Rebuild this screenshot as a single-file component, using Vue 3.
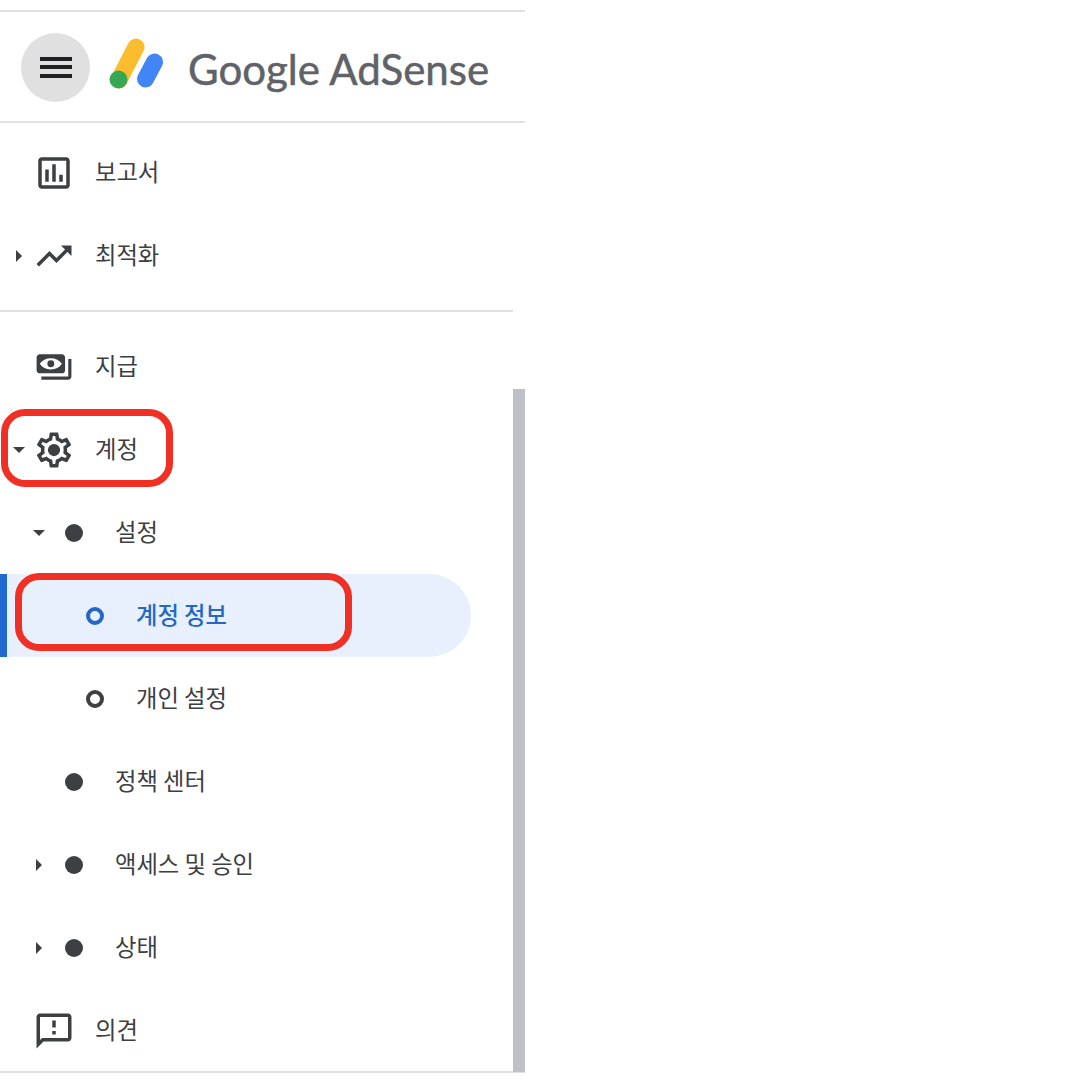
<script setup>
const ICONS = {
  report: { size: 42, d: 'M19 3H5c-1.1 0-2 .9-2 2v14c0 1.1.9 2 2 2h14c1.1 0 2-.9 2-2V5c0-1.1-.9-2-2-2zm0 16H5V5h14v14zM7 10h2v7H7zm4-3h2v10h-2zm4 6h2v4h-2z' },
  trend: { size: 42, d: 'M16 6l2.29 2.29-4.88 4.88-4-4L2 16.59 3.41 18l6-6 4 4 6.3-6.29L22 12V6z' },
  pay: { size: 38, d: 'M19 14V6c0-1.1-.9-2-2-2H3c-1.1 0-2 .9-2 2v8c0 1.1.9 2 2 2h14c1.1 0 2-.9 2-2zM3 10c1.5-2.4 4-3.6 7-3.6s5.5 1.2 7 3.6c-1.5 2.4-4 3.6-7 3.6s-5.5-1.2-7-3.6zm7-2.2a2.2 2.2 0 1 0 0 4.4 2.2 2.2 0 0 0 0-4.4zM23 7v11c0 1.1-.9 2-2 2H4v-2h17V7h2z' },
  gear: { size: 42, d: 'M19.43 12.98c.04-.32.07-.64.07-.98 0-.34-.03-.66-.07-.98l2.11-1.65c.19-.15.24-.42.12-.64l-2-3.46c-.09-.16-.26-.25-.44-.25-.06 0-.12.01-.17.03l-2.49 1c-.52-.4-1.08-.73-1.69-.98l-.38-2.65C14.46 2.18 14.25 2 14 2h-4c-.25 0-.46.18-.49.42l-.38 2.65c-.61.25-1.17.59-1.69.98l-2.49-1c-.06-.02-.12-.03-.18-.03-.17 0-.34.09-.43.25l-2 3.46c-.13.22-.07.49.12.64l2.11 1.65c-.04.32-.07.65-.07.98 0 .33.03.66.07.98l-2.11 1.65c-.19.15-.24.42-.12.64l2 3.46c.09.16.26.25.44.25.06 0 .12-.01.17-.03l2.49-1c.52.4 1.08.73 1.69.98l.38 2.65c.03.24.24.42.49.42h4c.25 0 .46-.18.49-.42l.38-2.65c.61-.25 1.17-.59 1.69-.98l2.49 1c.06.02.12.03.18.03.17 0 .34-.09.43-.25l2-3.46c.12-.22.07-.49-.12-.64l-2.11-1.65zm-1.98-1.71c.04.31.05.52.05.73 0 .21-.02.43-.05.73l-.14 1.13.89.7 1.08.84-.7 1.21-1.27-.51-1.04-.42-.9.68c-.43.32-.84.56-1.25.73l-1.06.43-.16 1.13-.2 1.35h-1.4l-.19-1.35-.16-1.13-1.06-.43c-.43-.18-.83-.41-1.23-.71l-.91-.7-1.06.43-1.27.51-.7-1.21 1.08-.84.89-.7-.14-1.13c-.03-.31-.05-.54-.05-.74s.02-.43.05-.73l.14-1.13-.89-.7-1.08-.84.7-1.21 1.27.51 1.04.42.9-.68c.43-.32.84-.56 1.25-.73l1.06-.43.16-1.13.2-1.35h1.39l.19 1.35.16 1.13 1.06.43c.43.18.83.41 1.23.71l.91.7 1.06-.43 1.27-.51.7 1.21-1.07.85-.89.7.14 1.13zM12 8.5a3.5 3.5 0 1 0 0 7 3.5 3.5 0 0 0 0-7z' },
  feedback: { size: 42, d: 'M20 2H4c-1.1 0-1.99.9-1.99 2L2 22l4-4h14c1.1 0 2-.9 2-2V4c0-1.1-.9-2-2-2zm0 14H5.17L4 17.17V4h16v12zm-9-4h2v2h-2zm0-6h2v4h-2z' }
}

const topItems = [
  { label: '보고서', icon: 'report' },
  { label: '최적화', icon: 'trend', caret: 'right' }
]
const lowerItems = [
  { label: '지급', icon: 'pay' },
  { label: '계정', icon: 'gear', caret: 'down', marked: true },
  { label: '설정', dot: 'solid', caret: 'down', level: 1 },
  { label: '계정 정보', dot: 'ring', level: 2, active: true, marked: true },
  { label: '개인 설정', dot: 'ring', level: 2 },
  { label: '정책 센터', dot: 'solid', level: 1 },
  { label: '액세스 및 승인', dot: 'solid', caret: 'right', level: 1 },
  { label: '상태', dot: 'solid', caret: 'right', level: 1 },
  { label: '의견', icon: 'feedback' }
]
</script>

<template>
  <aside class="sidebar">
    <header class="header">
      <button class="menu" type="button" aria-label="메뉴">
        <span></span><span></span><span></span>
      </button>
      <svg class="logo" width="60" height="56" viewBox="0 0 60 56" aria-hidden="true">
        <line x1="27" y1="11" x2="10" y2="44" stroke="#fbbc2e" stroke-width="17" stroke-linecap="round" />
        <line x1="45.5" y1="26" x2="36.5" y2="43" stroke="#4285f4" stroke-width="17" stroke-linecap="round" />
        <circle cx="9.5" cy="43.5" r="9" fill="#34a853" />
      </svg>
      <span class="brand">Google AdSense</span>
    </header>

    <nav class="group group-top">
      <a v-for="item in topItems" :key="item.label" class="row">
        <span class="caret-slot"><i v-if="item.caret" :class="'caret-' + item.caret"></i></span>
        <span class="icon-slot">
          <svg :width="ICONS[item.icon].size" :height="ICONS[item.icon].size" viewBox="0 0 24 24">
            <path :d="ICONS[item.icon].d" fill="currentColor" fill-rule="evenodd" />
          </svg>
        </span>
        <span class="label">{{ item.label }}</span>
      </a>
    </nav>

    <nav class="group group-lower">
      <a
        v-for="item in lowerItems"
        :key="item.label"
        class="row"
        :class="['level-' + (item.level || 0), { active: item.active }]"
      >
        <span class="caret-slot"><i v-if="item.caret" :class="'caret-' + item.caret"></i></span>
        <span class="icon-slot">
          <svg v-if="item.icon" :width="ICONS[item.icon].size" :height="ICONS[item.icon].size" viewBox="0 0 24 24">
            <path :d="ICONS[item.icon].d" fill="currentColor" fill-rule="evenodd" />
          </svg>
          <i v-else :class="'dot-' + item.dot"></i>
        </span>
        <span class="label">{{ item.label }}</span>
        <span v-if="item.marked" class="mark"></span>
      </a>
      <div class="scrollbar"></div>
    </nav>
  </aside>
</template>

<style>
html, body { margin: 0; background: #fff; overflow: hidden; }
</style>

<style scoped>
.sidebar {
  box-sizing: border-box;
  width: 525px;
  height: 1063px;
  margin-top: 10px;
  border-top: 2px solid #e0e0e0;
  border-bottom: 2px solid #e0e0e0;
  color: #3c4043;
  font-family: "Noto Sans CJK KR", "Noto Sans", sans-serif;
  display: flex;
  flex-direction: column;
}
.header {
  height: 111px;
  flex: none;
  box-sizing: border-box;
  border-bottom: 2px solid #e0e0e0;
  display: flex;
  align-items: center;
  padding-left: 21px;
}
.menu {
  width: 69px;
  height: 69px;
  margin-top: 1px;
  padding: 0;
  border: 0;
  border-radius: 50%;
  background: #e0e0e0;
  display: flex;
  flex-direction: column;
  align-items: center;
  justify-content: center;
  gap: 4.5px;
}
.menu span {
  display: block;
  width: 32px;
  height: 4px;
  background: #202124;
}
.logo { margin-left: 19px; margin-top: -6px; flex: none; }
.brand {
  margin-left: 19px;
  font-family: Lato, "Noto Sans", sans-serif;
  font-size: 42px;
  line-height: 1;
  color: #5f6368;
  -webkit-text-stroke: 0.5px #5f6368;
  white-space: nowrap;
  margin-top: 4px;
}
.group-top {
  height: 189px;
  box-sizing: border-box;
  margin-right: 12px;
  padding-top: 8px;
  border-bottom: 2px solid #e0e0e0;
  flex: none;
}
.group-lower {
  position: relative;
  flex: 1;
  padding-top: 13px;
}
.row {
  position: relative;
  height: 83px;
  display: flex;
  align-items: center;
  box-sizing: border-box;
  padding-left: 10px;
}
.level-1 { padding-left: 30px; }
.level-2 { padding-left: 51px; }
.caret-slot {
  width: 18px;
  margin-right: 8px;
  display: flex;
  justify-content: center;
  flex: none;
}
.caret-right {
  width: 0;
  height: 0;
  border-left: 6px solid #3c4043;
  border-top: 6px solid transparent;
  border-bottom: 6px solid transparent;
}
.caret-down {
  width: 0;
  height: 0;
  border-top: 6px solid #3c4043;
  border-left: 6px solid transparent;
  border-right: 6px solid transparent;
}
.icon-slot {
  width: 36px;
  height: 42px;
  margin-right: 23px;
  display: flex;
  align-items: center;
  justify-content: center;
  flex: none;
}
.icon-slot svg { flex: none; }
.dot-solid {
  width: 18px;
  height: 18px;
  border-radius: 50%;
  background: #3c4043;
}
.dot-ring {
  box-sizing: border-box;
  width: 18px;
  height: 18px;
  border: 4.5px solid currentColor;
  border-radius: 50%;
}
.label {
  font-size: 23.3px;
  line-height: 34px;
  margin-top: -3px;
  white-space: pre;
}
.active {
  width: 471px;
  height: 83px;
  color: #2568c4;
  font-weight: 500;
  background: #e8f0fd;
  border-left: 7px solid #1f69cf;
  border-radius: 0 42px 42px 0;
  padding-left: 44px;
}
.active .mark {
  left: 8px;
  top: -1px;
  width: 337px;
  height: 78px;
}
.mark {
  position: absolute;
  left: 1px;
  top: 1px;
  width: 172px;
  height: 78px;
  box-sizing: border-box;
  border: 7px solid #f03024;
  border-radius: 24px;
}
.scrollbar {
  position: absolute;
  right: 0;
  top: 77px;
  bottom: 0;
  width: 12px;
  background: #bdc1c6;
}
</style>
